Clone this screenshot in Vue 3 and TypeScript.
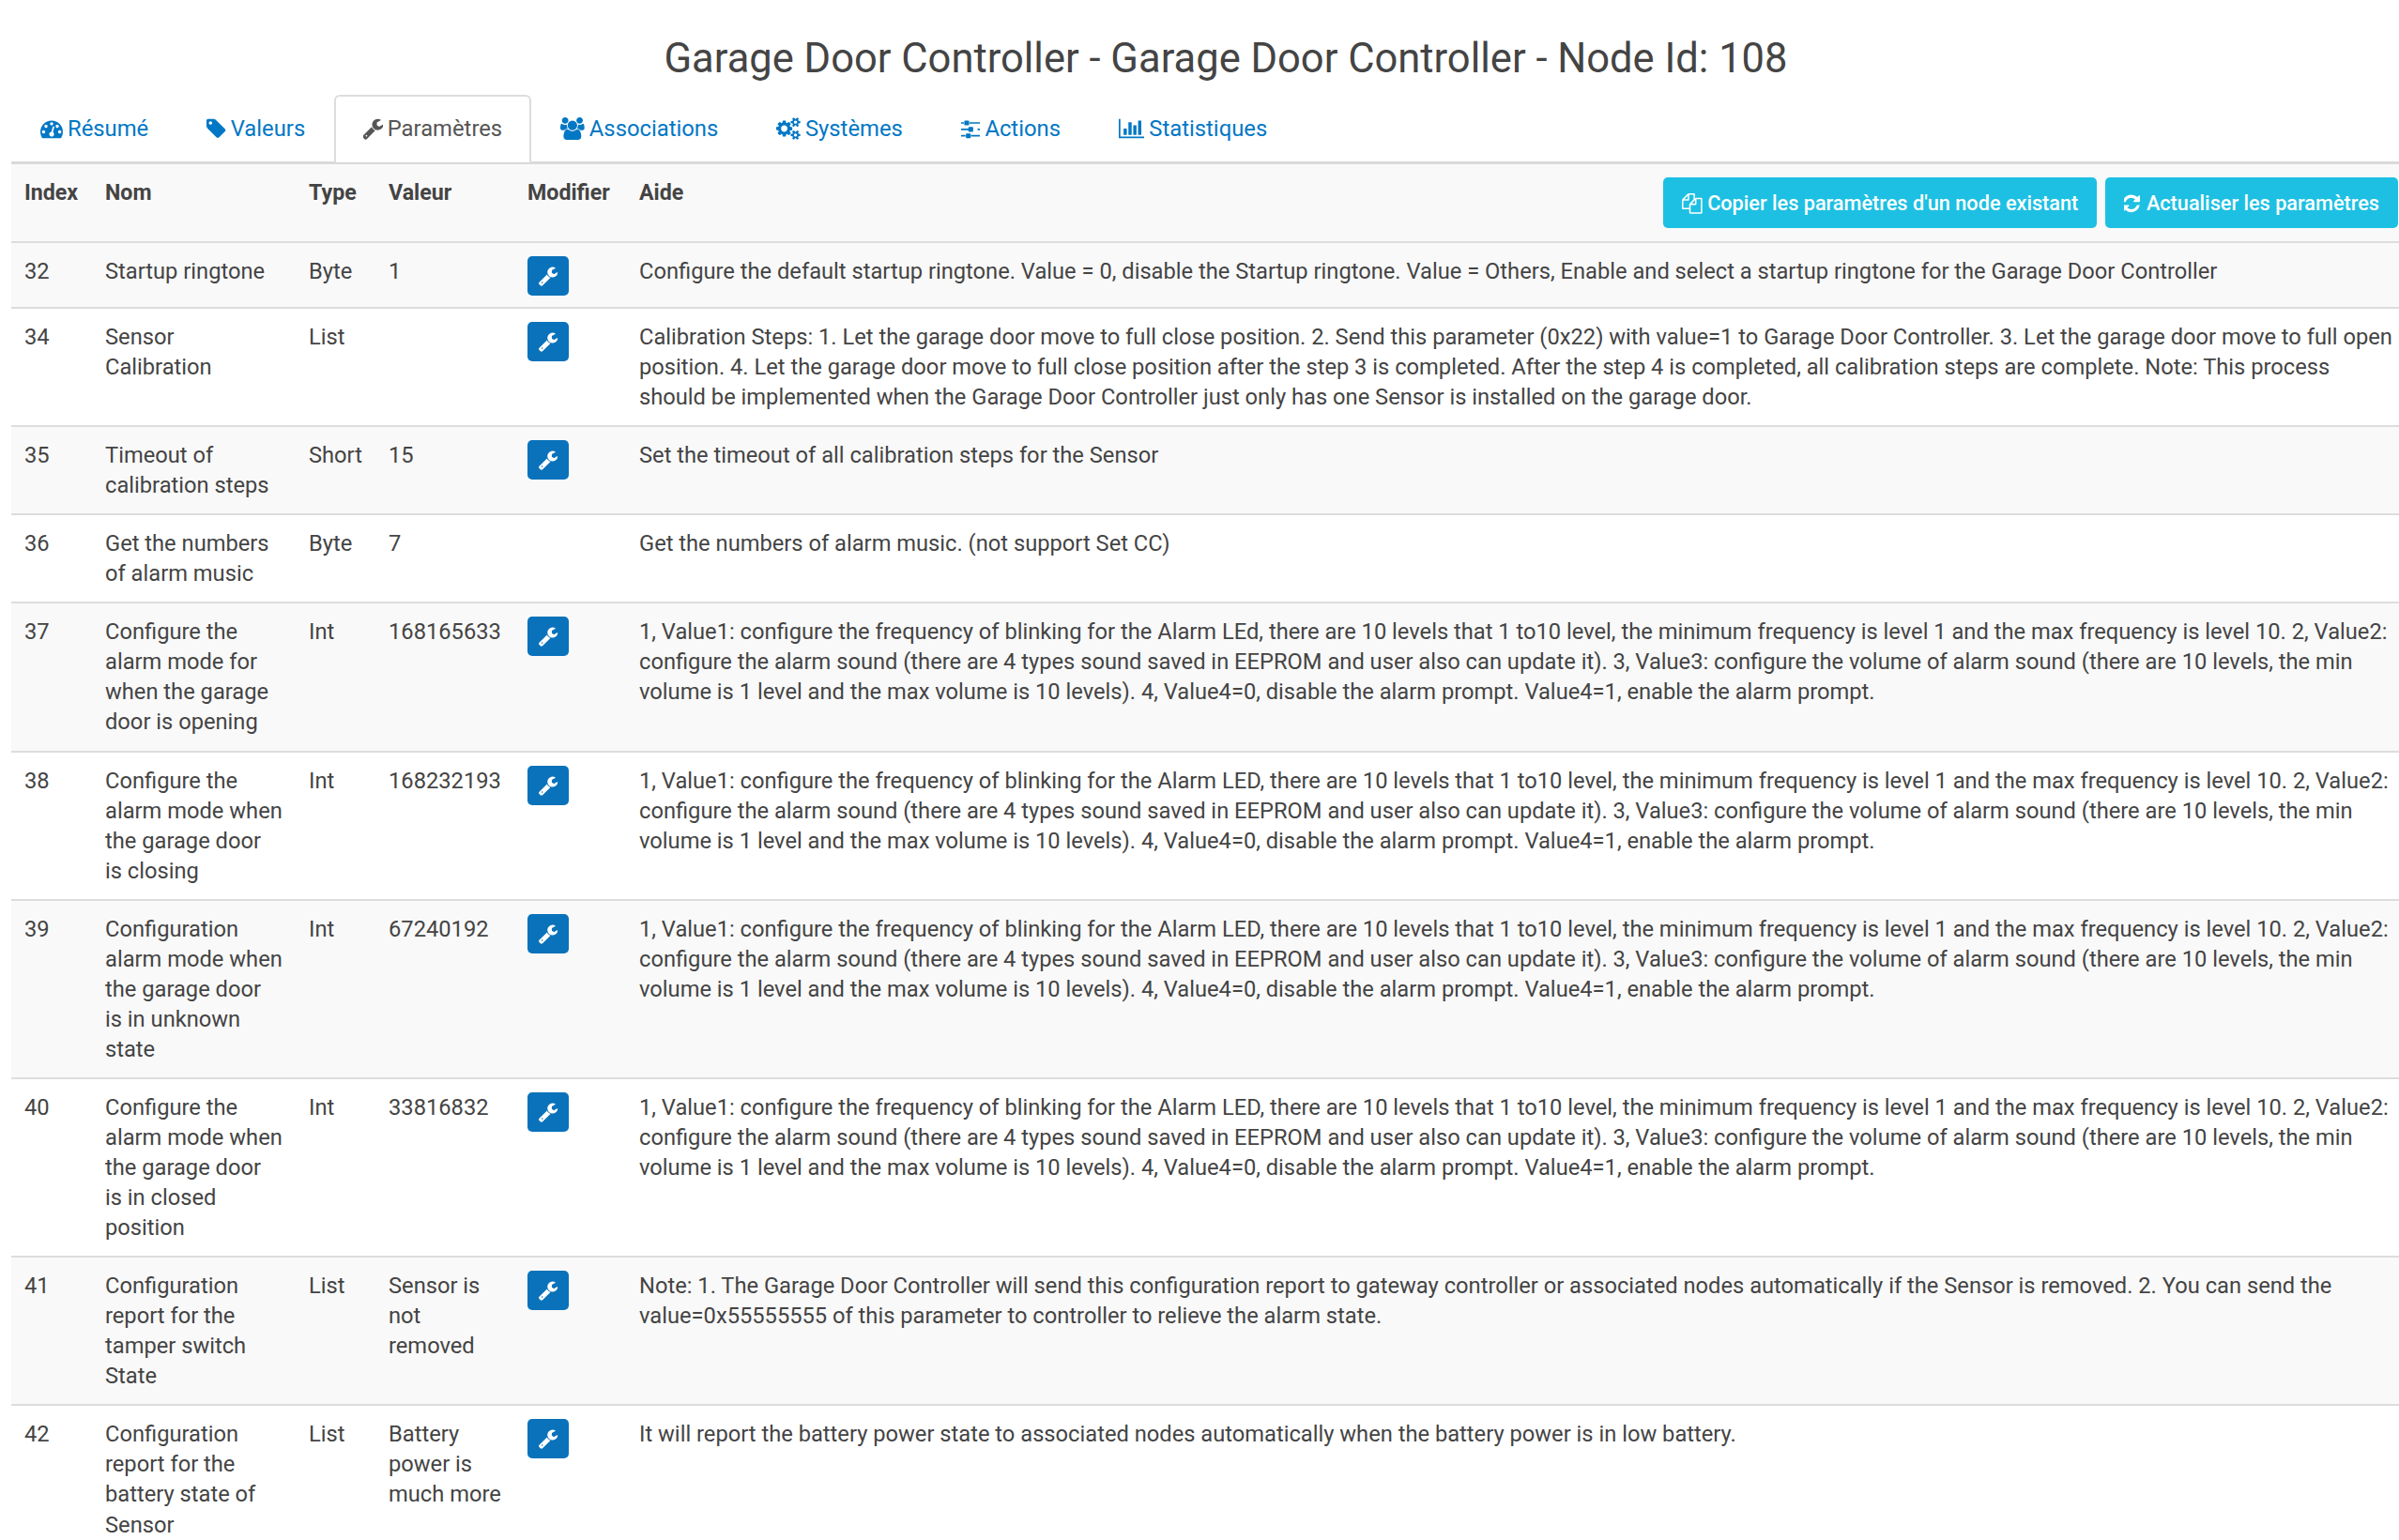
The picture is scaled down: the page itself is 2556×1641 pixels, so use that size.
<script setup lang="ts">
interface ParamRow {
  index: number
  name: string
  type: string
  value: string
  editable: boolean
  help: string
}

interface Tab {
  label: string
  view: string
  icon: string
  active?: boolean
}

const wrench = 'M448 1472q0-26-19-45t-45-19-45 19-19 45 19 45 45 19 45-19 19-45zm644-420l-682 682q-37 37-90 37-52 0-91-37l-106-108q-38-36-38-90 0-53 38-91l681-681q39 98 114.5 173.5t173.5 114.5zm634-435q0 39-23 106-47 134-164.5 217.5t-258.5 83.5q-185 0-316.5-131.5t-131.5-316.5 131.5-316.5 316.5-131.5q58 0 121.5 16.5t107.5 46.5q16 11 16 28t-16 28l-293 169v224l193 107q5-3 79-48.5t135.5-81 70.5-35.5q15 0 23.5 10t8.5 25z'

const tabs: Tab[] = [
  { label: 'Résumé', view: '0 0 1792 1792', icon: 'M384 1152q0-53-37.5-90.5t-90.5-37.5-90.5 37.5-37.5 90.5 37.5 90.5 90.5 37.5 90.5-37.5 37.5-90.5zm192-448q0-53-37.5-90.5t-90.5-37.5-90.5 37.5-37.5 90.5 37.5 90.5 90.5 37.5 90.5-37.5 37.5-90.5zm428 481l101-382q6-26-7.5-48.5t-38.5-29.5-48 7-30 39l-101 382q-60 5-107 43.5t-63 98.5q-20 77 20 146t117 89 146-20 89-117q16-60-6-117t-72-91zm660-33q0-53-37.5-90.5t-90.5-37.5-90.5 37.5-37.5 90.5 37.5 90.5 90.5 37.5 90.5-37.5 37.5-90.5zm-640-640q0-53-37.5-90.5t-90.5-37.5-90.5 37.5-37.5 90.5 37.5 90.5 90.5 37.5 90.5-37.5 37.5-90.5zm448 192q0-53-37.5-90.5t-90.5-37.5-90.5 37.5-37.5 90.5 37.5 90.5 90.5 37.5 90.5-37.5 37.5-90.5zm320 448q0 261-141 483-19 29-54 29h-1402q-35 0-54-29-141-221-141-483 0-182 71-348t191-286 286-191 348-71 348 71 286 191 191 286 71 348z' },
  { label: 'Valeurs', view: '128 0 1536 1792', icon: 'M576 448q0-53-37.5-90.5t-90.5-37.5-90.5 37.5-37.5 90.5 37.5 90.5 90.5 37.5 90.5-37.5 37.5-90.5zm1067 576q0 53-37 90l-491 492q-39 37-91 37-53 0-90-37l-715-716q-38-37-64.5-101t-26.5-117v-416q0-52 38-90t90-38h416q53 0 117 26.5t102 64.5l715 714q37 39 37 91z' },
  { label: 'Paramètres', view: '128 0 1536 1792', icon: wrench, active: true },
  { label: 'Associations', view: '0 0 1920 1792', icon: 'M593 896q-162 5-265 128h-134q-82 0-138-40.5t-56-118.5q0-353 124-353 6 0 43.5 21t97.5 42.5 119 21.5q67 0 133-23-5 37-5 66 0 139 81 256zm1071 637q0 120-73 189.5t-194 69.5h-874q-121 0-194-69.5t-73-189.5q0-53 3.5-103.5t14-109 26.5-108.5 43-97.5 62-81 85.5-53.5 111.5-20q10 0 43 21.5t73 48 107 48 135 21.5 135-21.5 107-48 73-48 43-21.5q61 0 111.5 20t85.5 53.5 62 81 43 97.5 26.5 108.5 14 109 3.5 103.5zm-1024-1277q0 106-75 181t-181 75-181-75-75-181 75-181 181-75 181 75 75 181zm704 384q0 159-112.5 271.5t-271.5 112.5-271.5-112.5-112.5-271.5 112.5-271.5 271.5-112.5 271.5 112.5 112.5 271.5zm576 225q0 78-56 118.5t-138 40.5h-134q-103-123-265-128 81-117 81-256 0-29-5-66 66 23 133 23 59 0 119-21.5t97.5-42.5 43.5-21q124 0 124 353zm-128-609q0 106-75 181t-181 75-181-75-75-181 75-181 181-75 181 75 75 181z' },
  { label: 'Systèmes', view: '0 0 1920 1792', icon: 'M896 896q0-106-75-181t-181-75-181 75-75 181 75 181 181 75 181-75 75-181zm768 512q0-52-38-90t-90-38-90 38-38 90q0 53 37.5 90.5t90.5 37.5 90.5-37.5 37.5-90.5zm0-1024q0-52-38-90t-90-38-90 38-38 90q0 53 37.5 90.5t90.5 37.5 90.5-37.5 37.5-90.5zm-384 421v185q0 10-7 19.5t-16 10.5l-155 24q-11 35-32 76 34 48 90 115 7 11 7 20 0 12-7 19-23 30-82.5 89.5t-78.5 59.5q-11 0-21-7l-115-90q-37 19-77 31-11 108-23 155-7 24-30 24h-186q-11 0-20-7.5t-10-17.5l-23-153q-34-10-75-31l-118 89q-7 7-20 7-11 0-21-8-144-133-144-160 0-9 7-19 10-14 41-53t47-61q-23-44-35-82l-152-24q-10-1-17-9.5t-7-19.5v-185q0-10 7-19.5t16-10.5l155-24q11-35 32-76-34-48-90-115-7-11-7-20 0-12 7-20 22-30 82-89t79-59q11 0 21 7l115 90q34-18 77-32 11-108 23-154 7-24 30-24h186q11 0 20 7.5t10 17.5l23 153q34 10 75 31l118-89q8-7 20-7 11 0 21 8 144 133 144 160 0 8-7 19-12 16-42 54t-45 60q23 48 34 82l152 23q10 2 17 10.5t7 19.5zm640 533v140q0 16-149 31-12 27-30 52 51 113 51 138 0 4-4 7-122 71-124 71-8 0-46-47t-52-68q-20 2-30 2t-30-2q-14 21-52 68t-46 47q-2 0-124-71-4-3-4-7 0-25 51-138-18-25-30-52-149-15-149-31v-140q0-16 149-31 13-29 30-52-51-113-51-138 0-4 4-7 4-2 35-20t59-34 30-16q8 0 46 46.5t52 67.5q20-2 30-2t30 2q51-71 92-112l6-2q4 0 124 70 4 3 4 7 0 25-51 138 17 23 30 52 149 15 149 31zm0-1024v140q0 16-149 31-12 27-30 52 51 113 51 138 0 4-4 7-122 71-124 71-8 0-46-47t-52-68q-20 2-30 2t-30-2q-14 21-52 68t-46 47q-2 0-124-71-4-3-4-7 0-25 51-138-18-25-30-52-149-15-149-31v-140q0-16 149-31 13-29 30-52-51-113-51-138 0-4 4-7 4-2 35-20t59-34 30-16q8 0 46 46.5t52 67.5q20-2 30-2t30 2q51-71 92-112l6-2q4 0 124 70 4 3 4 7 0 25-51 138 17 23 30 52 149 15 149 31z' },
  { label: 'Actions', view: '128 0 1536 1792', icon: 'M480 1408v128h-352v-128h352zm352-128q26 0 45 19t19 45v256q0 26-19 45t-45 19h-256q-26 0-45-19t-19-45v-256q0-26 19-45t45-19h256zm160-384v128h-864v-128h864zm-640-512v128h-224v-128h224zm1312 1024v128h-736v-128h736zm-960-1152q26 0 45 19t19 45v256q0 26-19 45t-45 19h-256q-26 0-45-19t-19-45v-256q0-26 19-45t45-19h256zm320 512q26 0 45 19t19 45v256q0 26-19 45t-45 19h-256q-26 0-45-19t-19-45v-256q0-26 19-45t45-19h256zm640 128v128h-224v-128h224zm0-512v128h-864v-128h864z' },
  { label: 'Statistiques', view: '0 0 2048 1792', icon: 'M640 896v512h-256v-512h256zm384-512v1024h-256v-1024h256zm1024 1152v128h-2048v-1536h128v1408h1920zm-640-896v768h-256v-768h256zm384-384v1152h-256v-1152h256z' },
]

const filesIcon = 'M1696 384q40 0 68 28t28 68v1216q0 40-28 68t-68 28h-960q-40 0-68-28t-28-68v-288h-544q-40 0-68-28t-28-68v-672q0-40 20-88t48-76l408-408q28-28 76-48t88-20h416q40 0 68 28t28 68v328q68-40 128-40h416zm-544 213l-299 299h299v-299zm-640-384l-299 299h299v-299zm196 647l316-316v-416h-384v416q0 40-28 68t-68 28h-416v640h512v-256q0-40 20-88t48-76zm956 804v-1152h-384v416q0 40-28 68t-68 28h-416v640h896z'
const refreshIcon = 'M1511 1056q0 5-1 7-64 268-268 434.5t-478 166.5q-146 0-282.5-55t-243.5-157l-129 129q-19 19-45 19t-45-19-19-45v-448q0-26 19-45t45-19h448q26 0 45 19t19 45-19 45l-137 137q71 66 161 102t187 36q134 0 250-65t186-179q11-17 53-117 8-23 30-23h192q13 0 22.5 9.5t9.5 22.5zm25-800v448q0 26-19 45t-45 19h-448q-26 0-45-19t-19-45 19-45l138-138q-148-137-349-137-134 0-250 65t-186 179q-11 17-53 117-8 23-30 23h-199q-13 0-22.5-9.5t-9.5-22.5v-7q65-268 270-434.5t480-166.5q146 0 284 55.5t245 156.5l130-129q19-19 45-19t45 19 19 45z'

const alarmHelp = (led: string) =>
  `1, Value1: configure the frequency of blinking for the Alarm ${led}, there are 10 levels that 1 to10 level, the minimum frequency is level 1 and the max frequency is level 10. 2, Value2: configure the alarm sound (there are 4 types sound saved in EEPROM and user also can update it). 3, Value3: configure the volume of alarm sound (there are 10 levels, the min volume is 1 level and the max volume is 10 levels). 4, Value4=0, disable the alarm prompt. Value4=1, enable the alarm prompt.`

const rows: ParamRow[] = [
  { index: 32, name: 'Startup ringtone', type: 'Byte', value: '1', editable: true, help: 'Configure the default startup ringtone. Value = 0, disable the Startup ringtone. Value = Others, Enable and select a startup ringtone for the Garage Door Controller' },
  { index: 34, name: 'Sensor Calibration', type: 'List', value: '', editable: true, help: 'Calibration Steps: 1. Let the garage door move to full close position. 2. Send this parameter (0x22) with value=1 to Garage Door Controller. 3. Let the garage door move to full open position. 4. Let the garage door move to full close position after the step 3 is completed. After the step 4 is completed, all calibration steps are complete. Note: This process should be implemented when the Garage Door Controller just only has one Sensor is installed on the garage door.' },
  { index: 35, name: 'Timeout of calibration steps', type: 'Short', value: '15', editable: true, help: 'Set the timeout of all calibration steps for the Sensor' },
  { index: 36, name: 'Get the numbers of alarm music', type: 'Byte', value: '7', editable: false, help: 'Get the numbers of alarm music. (not support Set CC)' },
  { index: 37, name: 'Configure the alarm mode for when the garage door is opening', type: 'Int', value: '168165633', editable: true, help: alarmHelp('LEd') },
  { index: 38, name: 'Configure the alarm mode when the garage door is closing', type: 'Int', value: '168232193', editable: true, help: alarmHelp('LED') },
  { index: 39, name: 'Configuration alarm mode when the garage door is in unknown state', type: 'Int', value: '67240192', editable: true, help: alarmHelp('LED') },
  { index: 40, name: 'Configure the alarm mode when the garage door is in closed position', type: 'Int', value: '33816832', editable: true, help: alarmHelp('LED') },
  { index: 41, name: 'Configuration report for the tamper switch State', type: 'List', value: 'Sensor is not removed', editable: true, help: 'Note: 1. The Garage Door Controller will send this configuration report to gateway controller or associated nodes automatically if the Sensor is removed. 2. You can send the value=0x55555555 of this parameter to controller to relieve the alarm state.' },
  { index: 42, name: 'Configuration report for the battery state of Sensor', type: 'List', value: 'Battery power is much more', editable: true, help: 'It will report the battery power state to associated nodes automatically when the battery power is in low battery.' },
]
</script>

<template>
  <div class="page">
    <h2 class="title">Garage Door Controller - Garage Door Controller - Node Id: 108</h2>

    <ul class="tabs">
      <li v-for="tab in tabs" :key="tab.label" :class="['tab', { active: tab.active }]">
        <svg class="ico" :viewBox="tab.view" fill="currentColor"><path :d="tab.icon" /></svg>
        {{ tab.label }}
      </li>
    </ul>

    <table class="params">
      <colgroup>
        <col class="c-index" />
        <col class="c-name" />
        <col class="c-type" />
        <col class="c-value" />
        <col class="c-edit" />
        <col />
      </colgroup>
      <thead>
        <tr>
          <th>Index</th>
          <th>Nom</th>
          <th>Type</th>
          <th>Valeur</th>
          <th>Modifier</th>
          <th>
            <div class="help-head">
              <span>Aide</span>
              <div class="actions">
                <button class="btn-info">
                  <svg class="ico" viewBox="0 0 1792 1792" fill="currentColor"><path :d="filesIcon" /></svg>
                  Copier les paramètres d'un node existant
                </button>
                <button class="btn-info">
                  <svg class="ico" viewBox="128 0 1536 1792" fill="currentColor"><path :d="refreshIcon" /></svg>
                  Actualiser les paramètres
                </button>
              </div>
            </div>
          </th>
        </tr>
      </thead>
      <tbody>
        <tr v-for="row in rows" :key="row.index">
          <td>{{ row.index }}</td>
          <td>{{ row.name }}</td>
          <td>{{ row.type }}</td>
          <td>{{ row.value }}</td>
          <td>
            <button v-if="row.editable" class="btn-edit" aria-label="Modifier">
              <svg viewBox="0 0 1792 1792" fill="currentColor"><path :d="wrench" /></svg>
            </button>
          </td>
          <td>{{ row.help }}</td>
        </tr>
      </tbody>
    </table>
  </div>
</template>

<style scoped>
.page {
  font-family: Roboto, "Liberation Sans", sans-serif;
  font-size: 23.7px;
  line-height: 32.05px;
  color: #444;
  padding-left: 12px;
}
.title {
  margin: 0;
  padding: 38px 0 14px 44px;
  font-size: 43.5px;
  line-height: 49px;
  font-weight: 400;
  text-align: center;
}
.tabs {
  display: flex;
  margin: 0;
  padding: 0;
  list-style: none;
  border-bottom: 3px solid #d9d9d9;
  height: 71px;
  box-sizing: content-box;
  font-size: 23.8px;
}
.tab {
  display: flex;
  align-items: center;
  gap: 5px;
  height: 72px;
  box-sizing: border-box;
  padding: 0 29px 2px;
  border: 2px solid transparent;
  border-bottom: 0;
  border-radius: 6px 6px 0 0;
  color: #0277c5;
  white-space: nowrap;
}
.tab.active {
  background: #fff;
  color: #555;
  border-color: #ddd;
}
.ico {
  height: 24px;
  flex: none;
}
.params {
  width: 2557px;
  table-layout: fixed;
  border-collapse: collapse;
}
.c-index { width: 86px; }
.c-name { width: 217px; }
.c-type { width: 85px; }
.c-value { width: 148px; }
.c-edit { width: 119px; }
th,
td {
  padding: 14px;
  text-align: left;
  vertical-align: top;
  border-bottom: 2px solid #ddd;
}
th {
  font-size: 23.2px;
  font-weight: 700;
}
thead tr,
tbody tr:nth-child(odd) {
  background: #f9f9f9;
}
.help-head {
  display: flex;
  justify-content: space-between;
}
.actions {
  display: flex;
  gap: 9px;
}
.btn-info {
  display: flex;
  align-items: center;
  gap: 5px;
  height: 54px;
  padding: 2px 20px 0;
  border: 0;
  border-radius: 5px;
  background: #1dc0e3;
  color: #fff;
  font: 500 21.7px/32px Roboto, "Liberation Sans", sans-serif;
  white-space: nowrap;
}
.btn-info .ico {
  height: 21.7px;
}
.btn-edit {
  display: block;
  width: 44px;
  height: 42px;
  margin-bottom: -2px;
  padding: 0;
  border: 0;
  border-radius: 5px;
  background: #0a72ba;
  color: #fff;
}
.btn-edit svg {
  display: block;
  width: 22px;
  height: 22px;
  margin: auto;
}
</style>

<style>
html,
body {
  overflow: hidden;
  height: 1641px;
  background: #fff;
}
</style>
